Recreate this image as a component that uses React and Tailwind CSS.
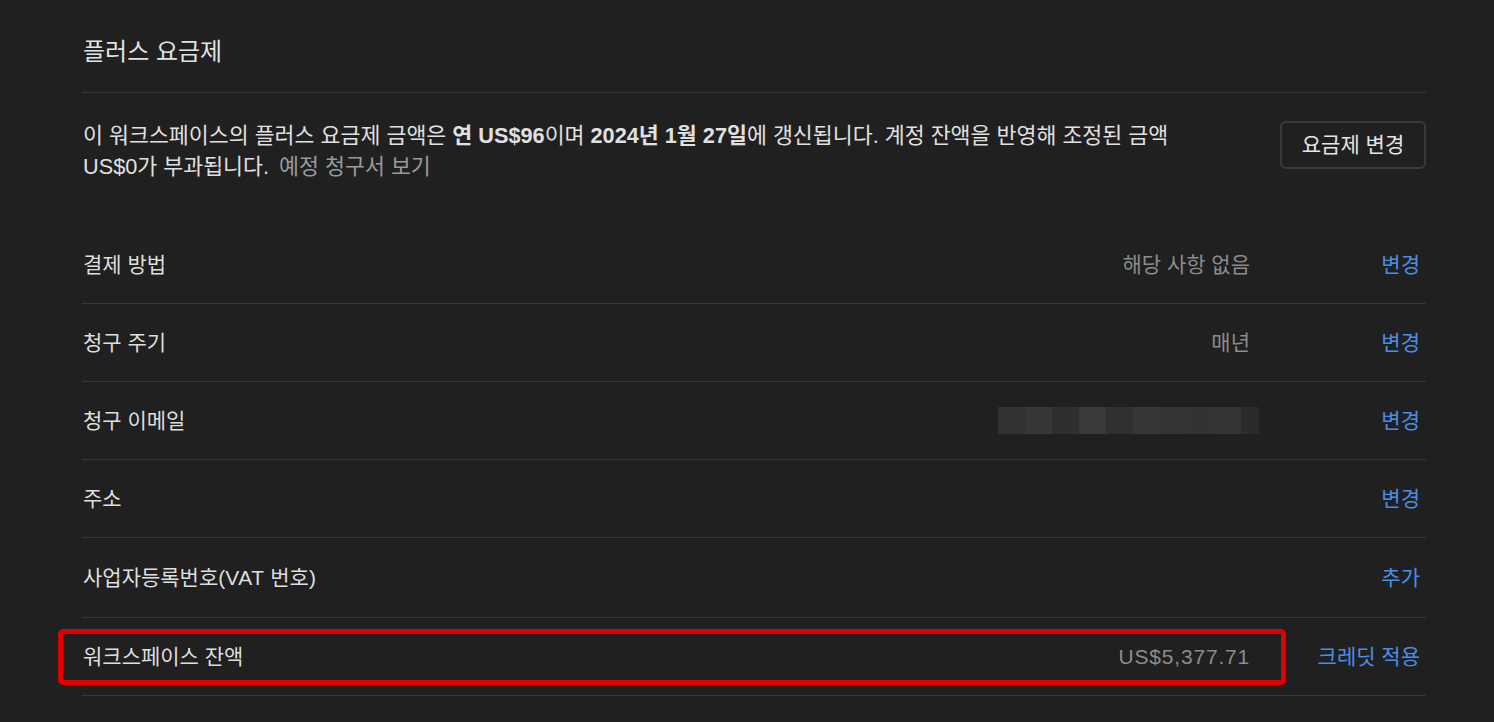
import React from "react";

const font = { fontFamily: '"Liberation Sans", "Noto Sans CJK KR", sans-serif' };

const blurBlocks = [
  "bg-[#323232]",
  "bg-[#373737]",
  "bg-[#2f2f2f]",
  "bg-[#3a3a3a]",
  "bg-[#303030]",
  "bg-[#363636]",
  "bg-[#343434]",
  "bg-[#333333]",
  "bg-[#353535]",
  "bg-[#2b2b2b]",
];

const BlurredEmail = () => (
  <div className="flex h-[27px] mr-[-9px]">
    {blurBlocks.map((c, i) => (
      <div key={i} className={(i === 9 ? "w-[18px] " : "w-[27px] ") + c} />
    ))}
  </div>
);

const Row = ({ label, value, action, tall, children }) => (
  <div
    className={
      "relative flex items-center border-b border-[#363636] " +
      (tall ? "h-[80px]" : "h-[78px]")
    }
  >
    <div className="flex-1 text-[21px] text-[#dedede] pl-[1px]">{label}</div>
    {value && <div className="text-[21px] text-[#8c8c8c]">{value}</div>}
    {children}
    <div className="w-[176px] pr-[6px] text-right text-[21px] text-[#4a8ee6]">
      {action}
    </div>
  </div>
);

export default function App() {
  return (
    <div className="min-h-screen bg-[#202020] pl-[82px] pr-[68px]" style={font}>
      <div className="pt-[38px] pb-[26px] border-b border-[#363636]">
        <h1 className="text-[24px] leading-[28px] text-[#e2e2e2] pl-[1px]">
          플러스 요금제
        </h1>
      </div>

      <div className="flex justify-between items-start pt-[27px]">
        <p className="text-[21.7px] leading-[31px] text-[#e0e0e0] pl-[1px]">
          이 워크스페이스의 플러스 요금제 금액은 <b>연 US$96</b>이며{" "}
          <b>2024년 1월 27일</b>에 갱신됩니다. 계정 잔액을 반영해 조정된 금액
          <br />
          US$0가 부과됩니다.{" "}
          <span className="text-[#9a9a9a] ml-[4px]">예정 청구서 보기</span>
        </p>
        <button className="mt-[1px] h-[48px] w-[146px] shrink-0 rounded-[6px] border-2 border-[#3a3a3a] text-[21px] text-[#e4e4e4]">
          요금제 변경
        </button>
      </div>

      <div className="mt-[44px]">
        <Row label="결제 방법" value="해당 사항 없음" action="변경" />
        <Row label="청구 주기" value="매년" action="변경" />
        <Row label="청구 이메일" action="변경">
          <BlurredEmail />
        </Row>
        <Row label="주소" action="변경" />
        <Row label={<span>사업자등록번호(<span className="tracking-[0.5px]">VAT</span> 번호)</span>} action="추가" tall />
        <Row label="워크스페이스 잔액" action="크레딧 적용">
          <div className="text-[21px] text-[#8c8c8c] tracking-[0.8px]">US$5,377.71</div>
          <div className="absolute left-[-24px] top-[11px] w-[1228px] h-[56px] border-[5px] border-[#e00000] rounded-[5px]" />
        </Row>
      </div>
    </div>
  );
}
